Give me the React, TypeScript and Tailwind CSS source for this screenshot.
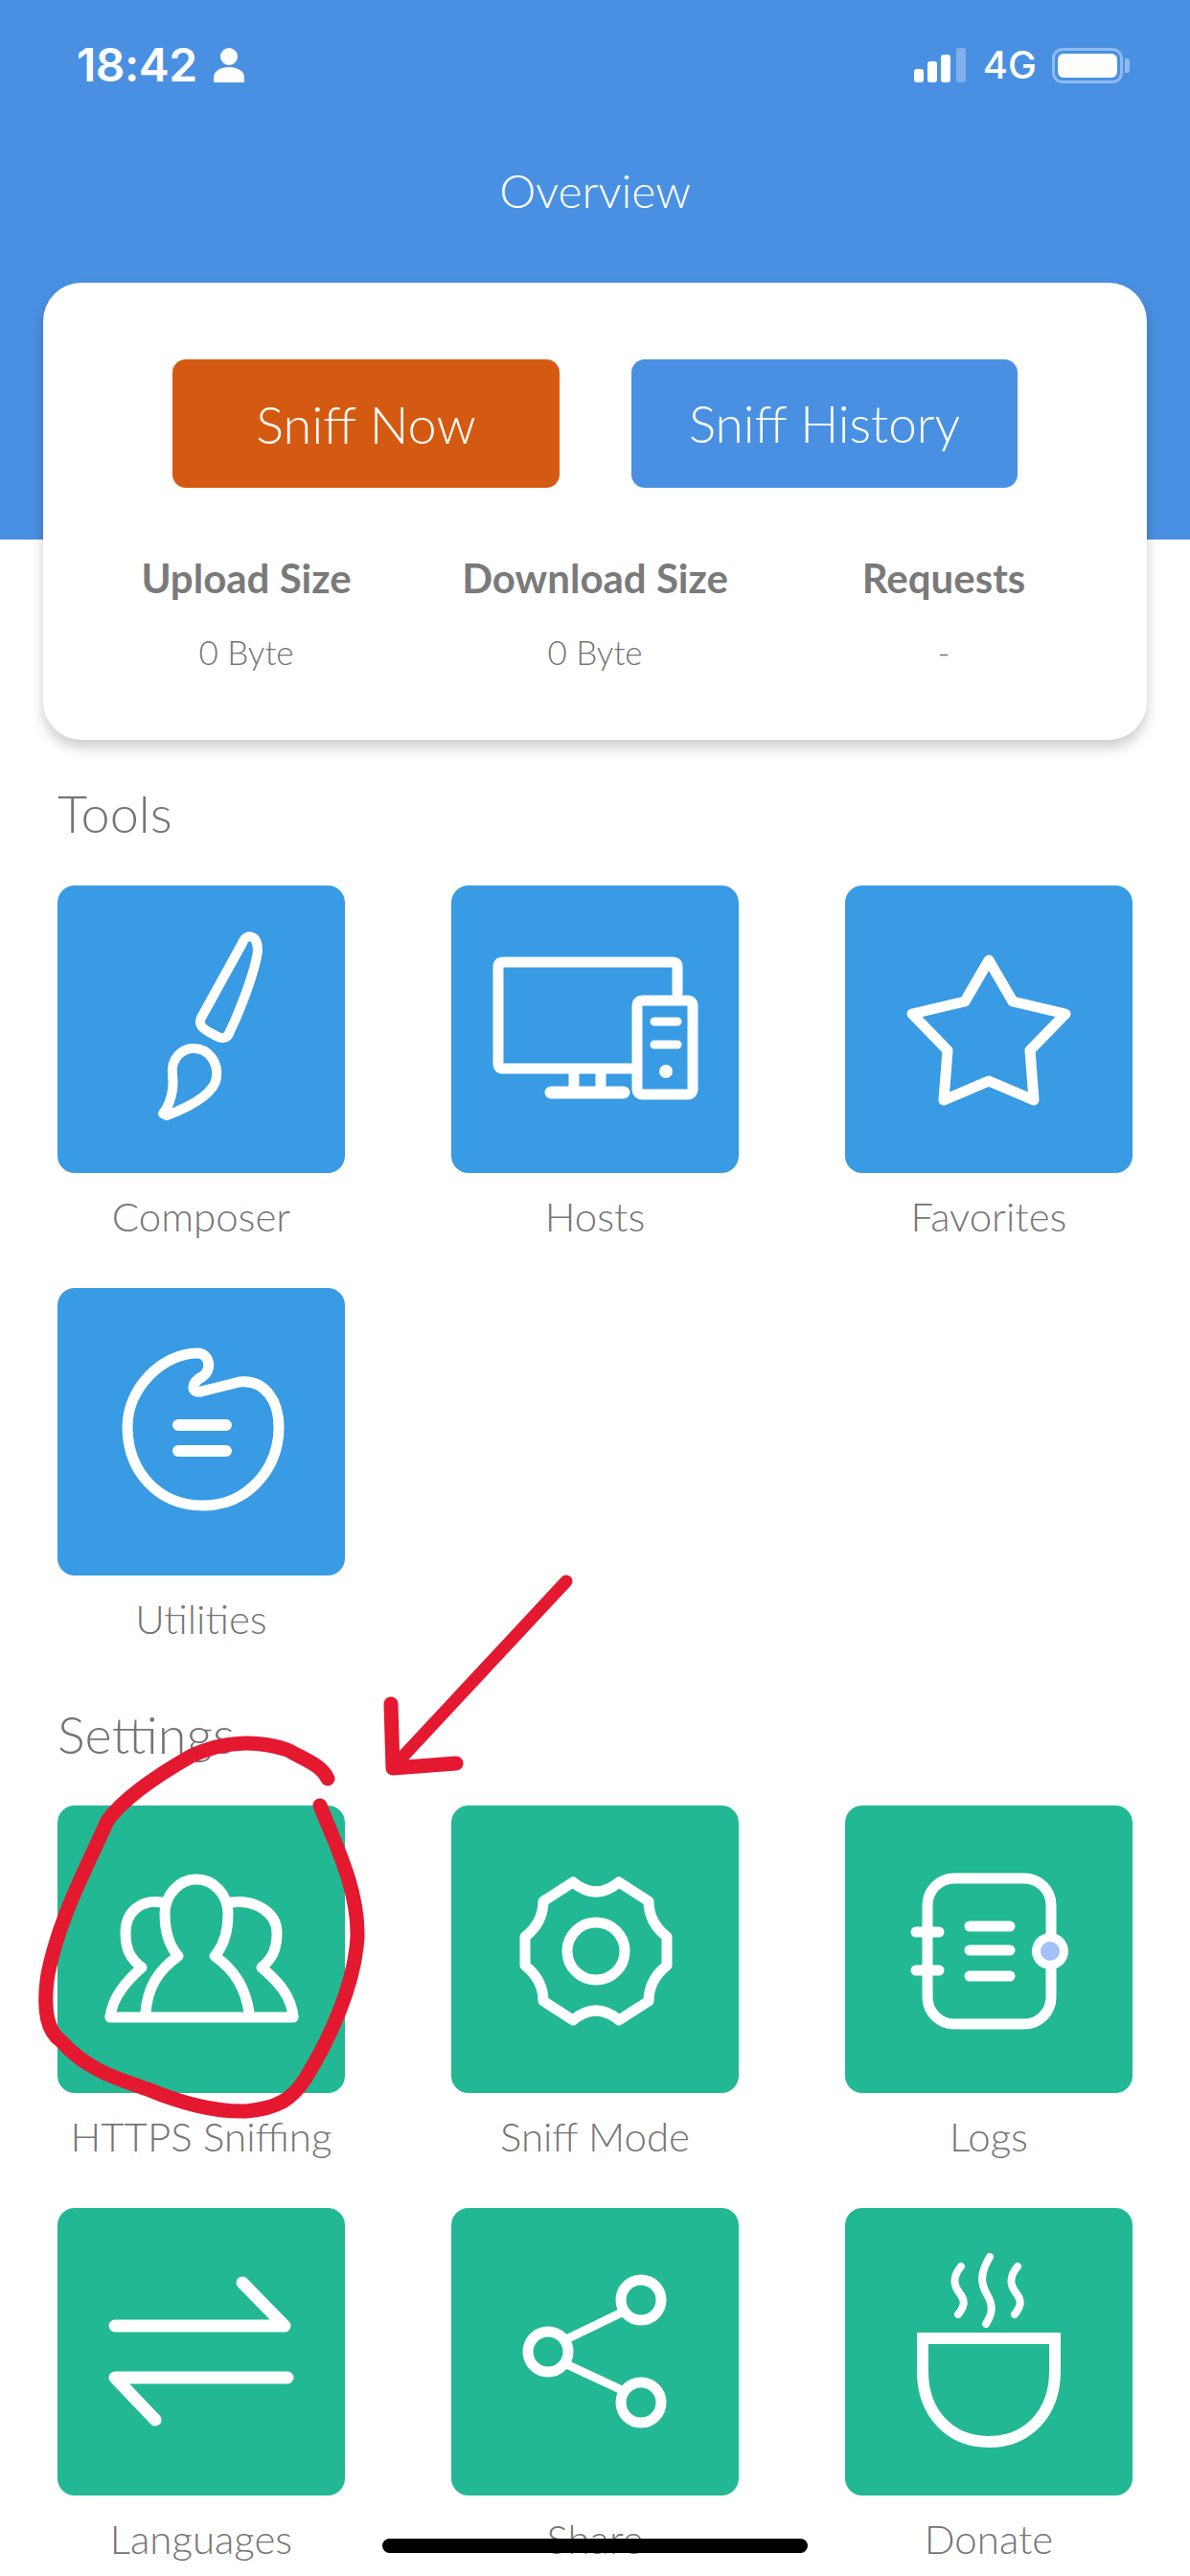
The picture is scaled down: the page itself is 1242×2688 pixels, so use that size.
import React from "react";

const Stroke = ({ children, w = 10 }: { children: React.ReactNode; w?: number }) => (
  <svg viewBox="0 0 300 300" className="w-full h-full" fill="none" stroke="#fff" strokeWidth={w} strokeLinecap="round" strokeLinejoin="round">
    {children}
  </svg>
);

const Brush = () => (
  <Stroke w={10}>
    <path d="M193 60C196 50 209 50 209 68C206 92 188 136 180 152C177 162 170 160 162 155C150 149 147 145 150 138Z" />
    <path d="M110 238C118 228 122 212 120 198C118 180 130 170 142 170C158 170 168 185 166 200C164 218 135 232 114 240Z" />
  </Stroke>
);

const Hosts = () => (
  <Stroke w={11}>
    <path d="M236 112V85Q236 80 231 80H54Q49 80 49 85V186Q49 191 54 191H187" />
    <rect x="194" y="120" width="58" height="98" rx="5" />
    <path d="M128 196V212M156 196V212" />
    <path d="M104 216H180" strokeWidth={13} />
    <path d="M212 142H236M212 166H236" strokeWidth={9} />
    <circle cx="224" cy="194" r="7" fill="#fff" stroke="none" />
  </Stroke>
);

const Star = () => (
  <Stroke w={11}>
    <path d="M150 78L175 121L230 134L193 172L197 224L150 204L103 224L107 172L70 134L125 121Z" />
  </Stroke>
);

const Palette = () => (
  <Stroke w={11}>
    <path d="M146 68C158 68 162 84 152 92C140 98 138 110 150 108L190 98C218 95 231 120 231 145C231 190 197 227 152 227C104 227 73 190 73 145C73 104 110 68 146 68Z" />
    <path d="M126 143H176M126 170H176" strokeWidth={12} />
  </Stroke>
);

const Users = () => (
  <Stroke w={11}>
    <path d="M92 216C94 190 105 172 126 157C115 145 112 130 112 113C112 93 127 77 145 77C163 77 178 93 178 113C178 130 175 145 164 157C185 172 196 190 200 216" />
    <path d="M108 101C88 98 71 110 71 133C71 150 76 160 88 169C70 185 58 200 55 220" />
    <path d="M182 101C204 98 229 110 229 133C229 150 224 160 213 169C232 185 244 200 246 220" />
    <path d="M55 221H246" />
  </Stroke>
);

const Gear = () => (
  <Stroke w={11}>
    <path d="M127 80Q151 100 175 80L206 100Q206 122 225 137V167Q206 182 206 204L175 224Q151 204 127 224L96 204Q96 182 77 167V137Q96 122 96 100Z" />
    <circle cx="151" cy="152" r="30" />
  </Stroke>
);

const Logs = () => (
  <Stroke w={11}>
    <rect x="86" y="76" width="129" height="152" rx="28" />
    <path d="M74 132H98M74 172H98" />
    <path d="M130 126H172M130 151H172M130 178H172" />
    <circle cx="214" cy="152" r="19" fill="#fff" stroke="none" />
    <circle cx="214" cy="152" r="10" fill="#a3c0fb" stroke="none" />
  </Stroke>
);

const Swap = () => (
  <Stroke w={13}>
    <path d="M193 78L237 123H60" />
    <path d="M240 177H60L102 221" />
  </Stroke>
);

const Share = () => (
  <Stroke w={11}>
    <circle cx="198" cy="96" r="21" />
    <circle cx="101" cy="150" r="21" />
    <circle cx="198" cy="203" r="21" />
    <path d="M120 137L178 109M120 163L178 190" strokeWidth={9} strokeLinecap="butt" />
  </Stroke>
);

const Cup = () => (
  <Stroke w={12}>
    <path d="M81 136H219V170C219 215 190 244 150 244C110 244 81 215 81 170Z" strokeLinejoin="miter" />
    <path d="M151 51C141 68 141 78 148 90C155 102 154 110 147 121" strokeWidth={8} />
    <path d="M121 61C112 72 113 80 119 88C126 97 125 102 118 111" strokeWidth={8} />
    <path d="M180 61C171 72 172 80 178 88C185 97 184 102 177 111" strokeWidth={8} />
  </Stroke>
);

const Tile = ({ label, color, children }: { label: string; color: string; children: React.ReactNode }) => (
  <div className="flex flex-col">
    <div className={`w-[300px] h-[300px] rounded-[18px] ${color}`}>{children}</div>
    <div className="h-[90px] flex items-center justify-center text-[42px] font-light text-[#757575] whitespace-nowrap">{label}</div>
  </div>
);

const Heading = ({ className, children }: { className: string; children: React.ReactNode }) => (
  <div className={`flex items-center px-[60px] text-[54px] font-light text-[#757575] ${className}`}>{children}</div>
);

const Stat = ({ label, value }: { label: string; value: string }) => (
  <div className="flex flex-col items-center">
    <div className="text-[42px] leading-[50px] font-bold text-[#7a7a7a] whitespace-nowrap">{label}</div>
    <div className="mt-[27px] text-[35px] leading-[50px] font-light text-[#757575]">{value}</div>
  </div>
);

export default function App() {
  const blue = "bg-[#389be3]";
  const green = "bg-[#22b894]";
  return (
    <div className="relative w-[1242px] h-[2688px] overflow-hidden bg-white font-[Lato,sans-serif]">
      <header className="h-[563px] bg-[#4a90e2] text-white">
        <div className="flex items-center justify-between h-[136px] pl-[80px] pr-[63px]">
          <div className="flex items-center gap-[17px]">
            <span className="font-[Inter,sans-serif] text-[48px] font-semibold tracking-[-0.5px]">18:42</span>
            <svg width="32" height="36" viewBox="0 0 32 36" fill="#fff">
              <circle cx="16" cy="9" r="9" />
              <path d="M0 36V31C0 24 7 20 16 20S32 24 32 31V36Z" />
            </svg>
          </div>
          <div className="flex items-center gap-[18px]">
            <div className="flex items-end gap-[4px] h-[36px]">
              <div className="w-[10px] h-[14px] rounded-[3px] bg-white" />
              <div className="w-[10px] h-[22px] rounded-[3px] bg-white" />
              <div className="w-[10px] h-[29px] rounded-[3px] bg-white" />
              <div className="w-[10px] h-[36px] rounded-[3px] bg-[#7fb0ec] ml-[2px]" />
            </div>
            <span className="font-[Inter,sans-serif] text-[40px] font-medium leading-none">4G</span>
            <div className="flex items-center gap-[2px] ml-[-2px]">
              <div className="w-[74px] h-[37px] rounded-[11px] border-[3px] border-[#8fbaf0] p-[3px]">
                <div className="w-full h-full rounded-[6px] bg-white" />
              </div>
              <div className="w-[5px] h-[15px] rounded-r-[3px] bg-[#8fbaf0]" />
            </div>
          </div>
        </div>
        <div className="h-[126px] flex items-center justify-center text-[48px] font-light">Overview</div>
      </header>

      <section className="relative mx-[45px] -mt-[268px] h-[477px] rounded-[40px] bg-white shadow-[0_8px_14px_rgba(0,0,0,0.2)] pt-[80px] px-[30px]">
        <div className="flex justify-center gap-[75px]">
          <button className="w-[404px] h-[134px] rounded-[14px] bg-[#d55a11] text-white text-[54px] font-light">Sniff Now</button>
          <button className="w-[403px] h-[134px] rounded-[14px] bg-[#4a90e2] text-white text-[53px] font-light">Sniff History</button>
        </div>
        <div className="grid grid-cols-3 mt-[69px]">
          <Stat label="Upload Size" value="0 Byte" />
          <Stat label="Download Size" value="0 Byte" />
          <Stat label="Requests" value="-" />
        </div>
      </section>

      <Heading className="h-[152px]">Tools</Heading>
      <div className="grid grid-cols-[300px_300px_300px] gap-x-[111px] gap-y-[30px] px-[60px]">
        <Tile label="Composer" color={blue}><Brush /></Tile>
        <Tile label="Hosts" color={blue}><Hosts /></Tile>
        <Tile label="Favorites" color={blue}><Star /></Tile>
        <Tile label="Utilities" color={blue}><Palette /></Tile>
      </div>

      <Heading className="h-[150px]">Settings</Heading>
      <div className="grid grid-cols-[300px_300px_300px] gap-x-[111px] gap-y-[30px] px-[60px]">
        <Tile label="HTTPS Sniffing" color={green}><Users /></Tile>
        <Tile label="Sniff Mode" color={green}><Gear /></Tile>
        <Tile label="Logs" color={green}><Logs /></Tile>
        <Tile label="Languages" color={green}><Swap /></Tile>
        <Tile label="Share" color={green}><Share /></Tile>
        <Tile label="Donate" color={green}><Cup /></Tile>
      </div>

      <svg className="absolute left-0 top-0 pointer-events-none" width="1242" height="2688" fill="none" stroke="#e4182f" strokeLinecap="round" strokeLinejoin="round">
        <path strokeWidth="15" d="M342 1856C335 1842 322 1838 300 1826C270 1816 235 1816 200 1832C165 1852 130 1875 112 1900C90 1950 62 2000 50 2060C44 2100 50 2120 64 2130C90 2160 125 2170 154 2180C190 2195 225 2204 257 2203C290 2200 305 2190 318 2170C343 2130 371 2070 373 2020C374 1970 348 1920 334 1884" />
        <path strokeWidth="13" d="M591 1650L412 1842" />
        <path strokeWidth="15" d="M408 1778L410 1845L476 1840" />
      </svg>

      <div className="absolute left-[399px] top-[2649px] w-[444px] h-[15px] rounded-full bg-black" />
    </div>
  );
}
